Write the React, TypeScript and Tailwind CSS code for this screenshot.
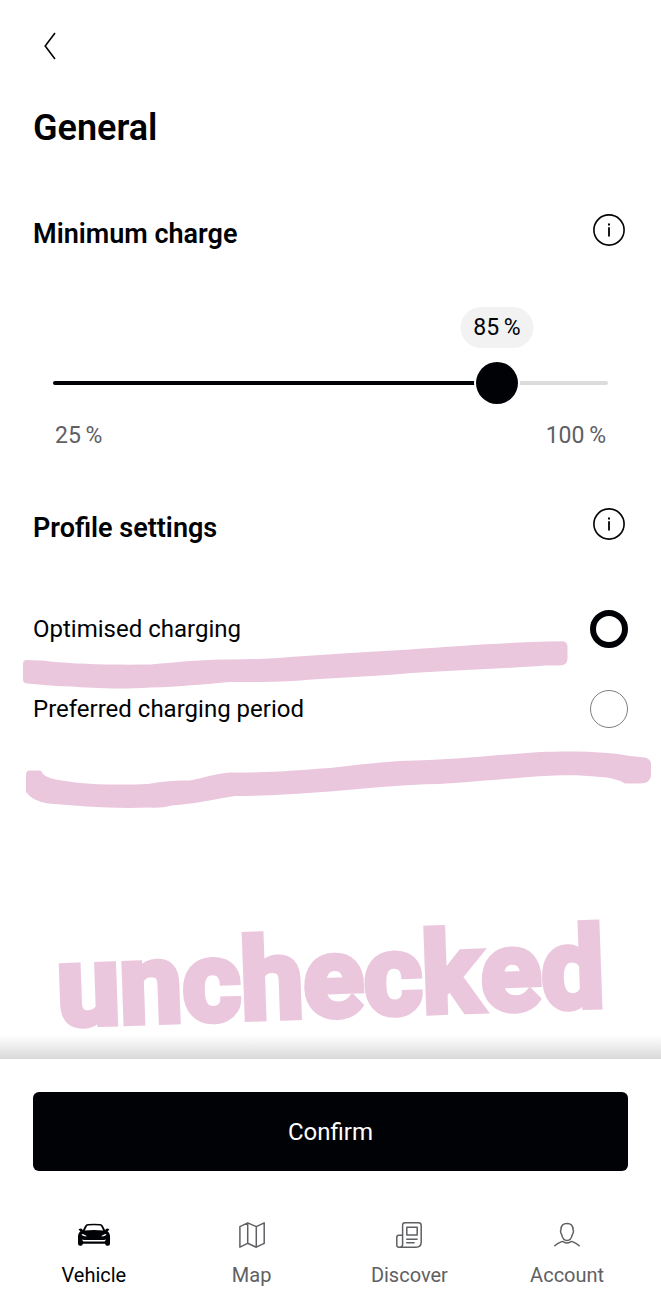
import { useState } from 'react';

const MIN = 25;
const MAX = 100;

const profiles = ['Optimised charging', 'Preferred charging period'];

function CarIcon() {
  return (
    <svg viewBox="0 0 34 26" className="w-[34px] h-[26px]" fill="currentColor">
      <path
        fillRule="evenodd"
        d="M8 4Q8.800 2.200 11 2Q17 1.400 23 2Q25.200 2.200 26 4L28.200 8.200Q28.600 6.600 30.200 6.400Q32.400 6.600 32.400 7.800L30.600 9.200Q32.900 11 33 13.600V21.400Q33 23.800 31 23.800Q28.600 24 28.400 22.600L28 21.800H6L5.600 22.600Q5.400 24 3 23.800Q1 23.800 1 21.400V13.600Q1.100 11 3.400 9.200L1.600 7.800Q1.600 6.600 3.800 6.400Q5.400 6.600 5.800 8.200ZM9.800 4.400L7.800 8.400Q12 8 17 8Q22 8 26.200 8.400L24.200 4.400Q23.800 3.500 22.800 3.400Q17 3 11.200 3.400Q10.200 3.500 9.800 4.400ZM4.600 12Q4.800 14.400 9.600 14.400Q8.800 12.600 4.600 12ZM29.400 12Q25.200 12.600 24.400 14.400Q29.200 14.400 29.400 12ZM4.800 17.400L6.400 19.400H27.600L29.200 17.400L27 18H7Z"
      />
    </svg>
  );
}

function MapIcon() {
  return (
    <svg
      viewBox="0 0 26 26"
      className="w-[26px] h-[26px]"
      fill="none"
      stroke="currentColor"
      strokeWidth="1.5"
      strokeLinejoin="round"
    >
      <path d="M.9 4.6L8.7.9L17.3 4.6L25.2.9V21.3L17.3 25.2L8.7 21.3L.9 25.2ZM8.7.9V21.3M17.3 4.6V25.2" />
    </svg>
  );
}

function NewsIcon() {
  return (
    <svg
      viewBox="0 0 26 26"
      className="w-[26px] h-[26px]"
      fill="none"
      stroke="currentColor"
      strokeWidth="1.5"
      strokeLinejoin="round"
    >
      <path d="M6.6 22.5V3Q6.6.8 9 .8H22.5Q25.2.8 25.2 3.4V20Q25.2 25.2 20 25.2H3Q.8 25.2.8 23V15.2Q.8 13.2 2.8 13.2H6.6M6.6 22.5Q6.6 25.2 3.8 25.2" />
      <path d="M10.8 5.2H21.2V13H10.8ZM10.2 17.3H21.6M10.2 20.8H18.6" />
    </svg>
  );
}

function AccountIcon() {
  return (
    <svg
      viewBox="0 0 26 26"
      className="w-[26px] h-[26px]"
      fill="none"
      stroke="currentColor"
      strokeWidth="1.5"
      strokeLinecap="round"
    >
      <path d="M13 1.600C17 1.600 19 4 19 7.600Q19.800 8.600 19.300 10.400Q19 11.600 18.400 12.400C17.600 16 16 18.600 13 18.600S8.400 16 7.600 12.400Q7 11.600 6.700 10.400Q6.200 8.600 7 7.600C7 4 9 1.600 13 1.600Z" />
      <path d="M.8 23.8C2.6 21.8 4.6 20.8 7.6 19.6Q8.8 19.2 9.600 19.800Q13 22.200 16.400 19.800Q17.200 19.200 18.400 19.600C21.400 20.800 23.400 21.800 25.200 23.800" />
    </svg>
  );
}

const tabs = [
  { label: 'Vehicle', icon: <CarIcon /> },
  { label: 'Map', icon: <MapIcon /> },
  { label: 'Discover', icon: <NewsIcon /> },
  { label: 'Account', icon: <AccountIcon /> },
];

function SectionHeader({ title }: { title: string }) {
  return (
    <div className="flex items-start justify-between">
      <h2 className="text-[27px] leading-[46px] font-semibold">{title}</h2>
      <button
        type="button"
        aria-label={`About ${title}`}
        className="size-[38px] flex items-center justify-center"
      >
        <svg viewBox="0 0 32 32" className="size-8" fill="none" stroke="currentColor">
          <circle cx="16" cy="16" r="15.1" strokeWidth="1.6" />
          <path d="M16 13.2V22.4" strokeWidth="1.8" />
          <path d="M16 9.6V11.6" strokeWidth="2" />
        </svg>
      </button>
    </div>
  );
}

function MarkerStrokes() {
  return (
    <svg
      viewBox="0 630 661 190"
      preserveAspectRatio="none"
      aria-hidden="true"
      className="absolute left-0 top-5 w-full h-[190px] pointer-events-none"
      fill="#ebc7de"
    >
      <path d="M27 660Q40 660 50 661.500C75 664 110 665 150 664.500C180 662 200 659.500 230 659.500Q265 659.500 290 657C330 654 370 651.500 410 649.500C450 646.500 500 643.500 530 642Q550 641.500 562 641.300Q567 641.500 567.500 646V659Q567 665.500 560 665.500H545C500 669 440 671 400 674C370 676.500 330 678 300 680.500C270 682.500 250 682 230 682C205 684 180 687 150 687.500C120 689.500 90 688 70 686.500C50 686 40 684.500 27 683.500Q23 683 23 680V664Q23 660 27 660Z" />
      <path d="M29 770.500H40Q42 771 43 774C48 779 58 780 75 782.500C100 785 125 785 148 784C160 782 170 780.500 190 780.500C210 776 220 773 232 772.500C270 773 300 770 330 768Q370 763 400 761C450 760 490 755.500 540 752C580 750.500 610 752 630 756L645 757.500Q651 759 651 764V776Q650 783.500 640 783.500H625Q615 777.500 600 777C580 774.500 560 775 545 776C510 778 480 781.500 440 784C400 784.500 370 788 330 791.500C290 794.500 260 796 235 796C215 799 195 804 172 805.500Q160 808.500 150 807.500C110 809 80 806 48 803.500Q32 801 26 792V775Q26 771 29 770.500Z" />
    </svg>
  );
}

export default function App() {
  const [charge, setCharge] = useState(85);
  const [profile, setProfile] = useState(profiles[0]);
  const percent = ((charge - MIN) / (MAX - MIN)) * 100;

  return (
    <div className="min-h-screen flex flex-col bg-white text-[#010205] font-[Roboto,'Liberation_Sans',sans-serif]">
      <main className="flex-1 pt-6 overflow-hidden">
        <div className="px-[33px]">
          <button
            type="button"
            aria-label="Back"
            className="size-11 pl-[11px] flex items-center"
          >
            <svg
              viewBox="0 0 12 28"
              className="w-3 h-7"
              fill="none"
              stroke="currentColor"
              strokeWidth="1.6"
            >
              <path d="M11 1L1.200 14L11 27" />
            </svg>
          </button>
          <h1 className="mt-9 text-4xl leading-12 font-semibold">General</h1>
        </div>

        <section className="mt-[59px] px-[33px]">
          <SectionHeader title="Minimum charge" />
          <div className="mt-[50px] mx-5">
            <div className="relative h-[41px]">
              <output
                htmlFor="charge"
                style={{ left: `${percent}%` }}
                className="
                  absolute -translate-x-1/2 w-[73px] rounded-full bg-[#f2f2f2]
                  text-center text-[23px] leading-[41px] whitespace-nowrap
                "
              >
                {charge}&#8201;%
              </output>
            </div>
            <div className="relative mt-3.5 h-[42px] flex items-center">
              <div className="w-full h-1 rounded-full bg-[#dcdcdc]">
                <div
                  style={{ width: `${percent}%` }}
                  className="h-full rounded-full bg-[#010205]"
                />
              </div>
              <input
                id="charge"
                type="range"
                aria-label="Minimum charge"
                min={MIN}
                max={MAX}
                value={charge}
                onChange={(e) => setCharge(Number(e.target.value))}
                className="
                  absolute inset-y-0 -inset-x-[21px] appearance-none bg-transparent
                  [&::-webkit-slider-thumb]:appearance-none
                  [&::-webkit-slider-thumb]:size-[42px]
                  [&::-webkit-slider-thumb]:rounded-full
                  [&::-webkit-slider-thumb]:bg-[#010205]
                  [&::-webkit-slider-thumb]:shadow-[0_0_0_2px_white]
                "
              />
            </div>
            <div className="mt-4 px-0.5 flex justify-between text-[23px] leading-8 text-[#5f6063]">
              <span>{MIN}&#8201;%</span>
              <span>{MAX}&#8201;%</span>
            </div>
          </div>
        </section>

        <section className="mt-[53px]">
          <div className="px-[33px]">
            <SectionHeader title="Profile settings" />
          </div>
          <div className="relative mt-[59px] px-[33px] flex flex-col gap-[42px]">
            {profiles.map((name) => (
              <label
                key={name}
                className="flex items-center justify-between text-2xl leading-10 h-[38px]"
              >
                {name}
                <input
                  type="radio"
                  name="profile"
                  value={name}
                  checked={profile === name}
                  onChange={() => setProfile(name)}
                  className="
                    appearance-none size-[38px] rounded-full border border-[#7c7d80]
                    checked:border-[6px] checked:border-[#010205]
                  "
                />
              </label>
            ))}
            <MarkerStrokes />
          </div>
        </section>

        <p
          className="
            mt-[180px] text-center text-[112px] leading-[140px] font-bold
            text-[#ebc7de] [-webkit-text-stroke:6px_#ebc7de] [stroke-linejoin:round]
            -rotate-2
          "
        >
          unchecked
        </p>
      </main>

      <div className="h-6 -mt-6 bg-linear-to-b from-transparent to-black/15" />
      <footer className="pt-[33px] pb-2.5">
        <div className="px-[33px]">
          <button
            type="button"
            className="w-full h-[79px] rounded-md bg-[#010205] text-white text-2xl"
          >
            Confirm
          </button>
        </div>
        <nav className="mt-[51px] px-[15px] grid grid-cols-4">
          {tabs.map((tab, i) => (
            <a
              key={tab.label}
              href="#"
              aria-current={i === 0 ? 'page' : undefined}
              className="
                flex flex-col items-center gap-3 text-xl leading-[30px]
                text-[#5f6063] aria-[current=page]:text-[#010205]
              "
            >
              {tab.icon}
              {tab.label}
            </a>
          ))}
        </nav>
      </footer>
    </div>
  );
}
